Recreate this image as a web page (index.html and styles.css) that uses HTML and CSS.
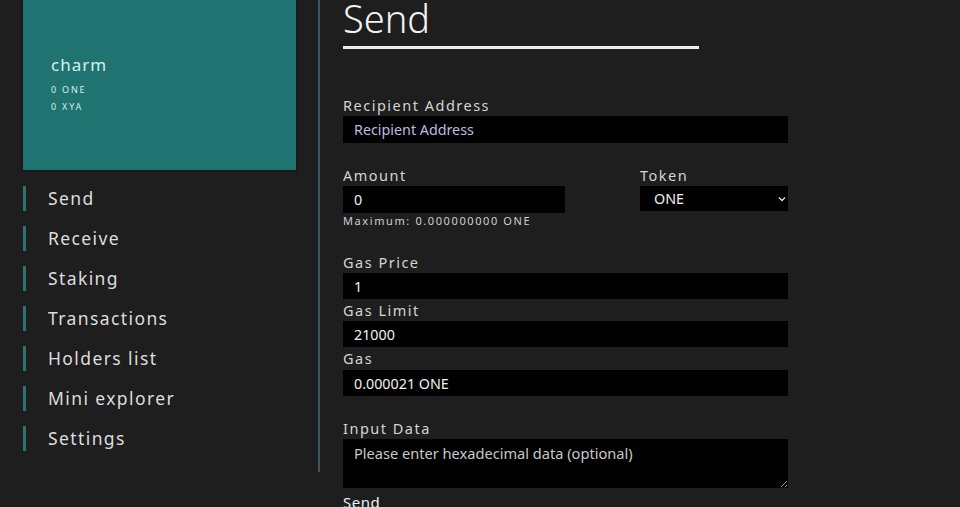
FILE: index.html
```html
<!DOCTYPE html>
<html lang="en">
<head>
  <meta charset="UTF-8">
  <meta name="viewport" content="width=device-width, initial-scale=1.0">
  <title>Wallet - Send</title>
  <link rel="stylesheet" href="styles.css">
</head>
<body>
  <div class="app">
    <aside class="sidebar">
      <div class="account">
        <div class="account-name">charm</div>
        <div class="account-balance">0 ONE</div>
        <div class="account-balance">0 XYA</div>
      </div>
      <nav class="menu">
        <a class="menu-item" href="#">Send</a>
        <a class="menu-item" href="#">Receive</a>
        <a class="menu-item" href="#">Staking</a>
        <a class="menu-item" href="#">Transactions</a>
        <a class="menu-item" href="#">Holders list</a>
        <a class="menu-item" href="#">Mini explorer</a>
        <a class="menu-item" href="#">Settings</a>
      </nav>
    </aside>

    <main class="content">
      <h1 class="title">Send</h1>

      <form class="send-form">
        <div class="field">
          <label for="recipient">Recipient Address</label>
          <input type="text" id="recipient" class="input" placeholder="Recipient Address">
        </div>

        <div class="row">
          <div class="field amount">
            <label for="amount">Amount</label>
            <input type="text" id="amount" class="input" value="0">
            <div class="hint">Maximum: 0.000000000 ONE</div>
          </div>
          <div class="field token">
            <label for="token">Token</label>
            <div class="select-wrap">
              <select id="token" class="input select">
                <option>ONE</option>
                <option>XYA</option>
              </select>
              <svg class="chevron" width="8" height="6" viewBox="0 0 8 6">
                <path d="M1 1.5 L4 4.5 L7 1.5" fill="none" stroke="#ddd" stroke-width="1.4"/>
              </svg>
            </div>
          </div>
        </div>

        <div class="gas">
          <div class="field">
            <label for="gas-price">Gas Price</label>
            <input type="text" id="gas-price" class="input" value="1">
          </div>
          <div class="field">
            <label for="gas-limit">Gas Limit</label>
            <input type="text" id="gas-limit" class="input" value="21000">
          </div>
          <div class="field">
            <label for="gas">Gas</label>
            <input type="text" id="gas" class="input" value="0.000021 ONE" readonly>
          </div>
        </div>

        <div class="field">
          <label for="data">Input Data</label>
          <textarea id="data" class="input textarea" placeholder="Please enter hexadecimal data (optional)"></textarea>
        </div>

        <button type="button" class="send-btn">Send</button>
      </form>
    </main>
  </div>
</body>
</html>
```

FILE: styles.css
```css
body {
  margin: 0;
  padding: 0;
  background-color: #1e1e1e;
  font-family: "Noto Sans", "Open Sans", sans-serif;
  color: #dcdcdc;
  height: 507px;
  overflow: hidden;
}

.app {
  display: flex;
  align-items: flex-start;
}

.sidebar {
  width: 297px;
  height: 472px;
  padding-left: 21px;
  border-right: 2px solid #3d5660;
  flex-shrink: 0;
}

.account {
  width: 277px;
  height: 172px;
  background: #1f7471;
  border: 2px solid #161a1a;
  border-top: none;
  padding-left: 28px;
  box-sizing: border-box;
  padding-top: 52px;
  color: #d6efec;
}

.account-name {
  font-size: 17px;
  line-height: 26px;
  letter-spacing: 1px;
}

.account-balance {
  font-size: 9px;
  line-height: 17px;
  letter-spacing: 1.8px;
}

.account-name + .account-balance {
  margin-top: 3px;
}

.menu {
  display: flex;
  flex-direction: column;
  margin-top: 6px;
  padding-left: 2px;
}

.menu-item {
  display: flex;
  align-items: center;
  height: 40px;
  color: #dddddd;
  text-decoration: none;
  font-size: 17.5px;
  letter-spacing: 1.4px;
}

.menu-item::before {
  content: "";
  width: 3px;
  height: 25px;
  background: #2a7571;
  margin-right: 22px;
}

.content {
  padding-left: 23px;
  flex: 1;
}

.title {
  margin: -2px 0 0;
  width: 356px;
  font-size: 38px;
  line-height: 40px;
  font-weight: 300;
  color: #f2f2f2;
  padding-bottom: 8px;
  border-bottom: 3px solid #ededed;
}

.send-form {
  display: flex;
  flex-direction: column;
  width: 445px;
  margin-top: 47px;
}

.field {
  display: flex;
  flex-direction: column;
}

.field label {
  font-size: 14.5px;
  line-height: 18px;
  letter-spacing: 1.5px;
  color: #d4d4d4;
  margin-bottom: 2px;
}

.input {
  height: 27px;
  box-sizing: border-box;
  background: #000;
  border: none;
  color: #f0f0f0;
  font-family: "Noto Sans", "Open Sans", sans-serif;
  font-size: 14.3px;
  padding: 0 11px;
  outline: none;
}

.input::placeholder {
  color: #bcbce0;
}

.row {
  display: flex;
  justify-content: space-between;
  margin-top: 23px;
}

.amount {
  width: 222px;
}

.token {
  width: 148px;
}

.select-wrap {
  position: relative;
}

.select {
  width: 100%;
  height: 25px;
  padding-left: 14px;
  appearance: none;
  -webkit-appearance: none;
}

.chevron {
  position: absolute;
  right: 2px;
  top: 10px;
}

.hint {
  font-size: 11px;
  line-height: 15px;
  letter-spacing: 1.6px;
  color: #cfcfcf;
}

.gas {
  display: flex;
  flex-direction: column;
  gap: 2px;
  margin-top: 25px;
}

.gas .input {
  height: 26px;
}

.gas .field:last-child .input {
  margin-top: 1px;
}

.gas + .field {
  margin-top: 23px;
}

.textarea {
  height: 49px;
  padding-top: 4px;
  font-size: 14.6px;
  resize: vertical;
}

.textarea::placeholder {
  color: #c8c8c8;
}

.send-btn {
  align-self: flex-start;
  margin-top: 5px;
  padding: 0;
  background: none;
  border: none;
  color: #f0f0f0;
  font-family: "Noto Sans", "Open Sans", sans-serif;
  font-size: 15px;
  line-height: 18px;
  letter-spacing: 0.5px;
  cursor: pointer;
}
```
